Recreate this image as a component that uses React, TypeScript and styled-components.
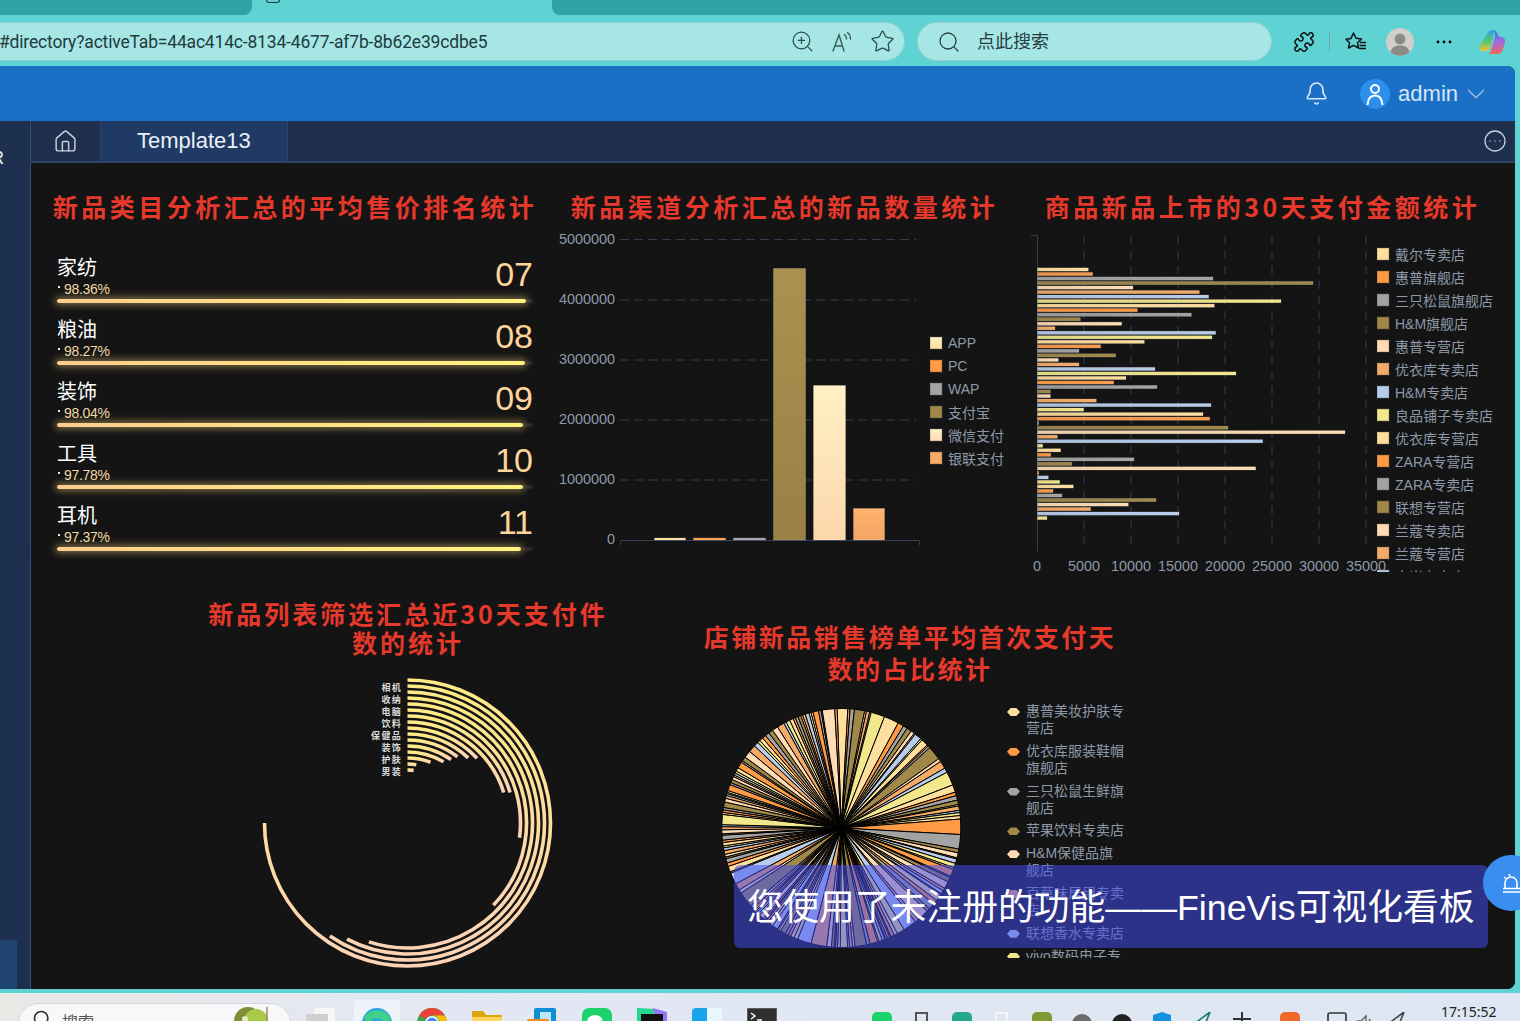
import React from 'react';
import styled, { createGlobalStyle } from 'styled-components';
import { Bell, ChevronDown, CircleEllipsis, House, Puzzle, Search, Star, ZoomIn } from 'lucide-react';

const SANS = '"Liberation Sans", "Noto Sans CJK SC", sans-serif';
const PALETTE = ['#ffdf9e', '#ff9a45', '#a3a3a3', '#a08848', '#ffdcb4', '#f5ab68', '#b8ccec', '#f2e78a'];

const Global = createGlobalStyle`
  html, body { margin: 0; padding: 0; background: #5fd2d3; }
  * { box-sizing: border-box; }
`;

const Screen = styled.div`
  position: relative;
  width: 1520px;
  height: 1021px;
  overflow: hidden;
  background: #5fd2d3;
  font-family: ${SANS};
  display: flex;
  flex-direction: column;
`;

/* browser chrome */
const TabStrip = styled.div`
  height: 22px;
  flex: none;
  display: flex;
  align-items: flex-start;
`;
const BrowserTab = styled.div<{ $w?: number; $side: 'l' | 'r' }>`
  height: 15px;
  background: #30a3a6;
  flex: ${p => (p.$w ? `0 0 ${p.$w}px` : '1')};
  border-radius: ${p => (p.$side === 'l' ? '0 0 8px 0' : '0 0 0 8px')};
`;
const ActiveTab = styled.div`
  flex: 0 0 300px;
  height: 15px;
  padding-left: 14px;
`;
const Favicon = styled.div`
  width: 14px;
  height: 3px;
  border: 1px solid #1c3a3a;
  border-top: none;
  border-radius: 0 0 3px 3px;
`;
const AddressRow = styled.div`
  height: 44px;
  flex: none;
  display: flex;
  align-items: flex-start;
  color: #2b4a4a;
`;
const UrlPill = styled.div`
  width: 905px;
  height: 39px;
  background: #a6e7e6;
  border: 1px solid #93cfcf;
  border-left: none;
  border-radius: 0 20px 20px 0;
  display: flex;
  align-items: center;
  padding-right: 2px;
`;
const UrlText = styled.div`
  flex: 1;
  margin-left: -1px;
  font-family: "Roboto", sans-serif;
  font-size: 17.5px;
  letter-spacing: -0.18px;
  color: #1f3b3c;
  white-space: nowrap;
`;
const IconSlot = styled.div<{ $w: number }>`
  flex: 0 0 ${p => p.$w}px;
  display: flex;
  align-items: center;
  justify-content: center;
`;
const SearchPill = styled.div`
  width: 355px;
  height: 39px;
  margin-left: 12px;
  background: #a6e7e6;
  border: 1px solid #93cfcf;
  border-radius: 20px;
  display: flex;
  align-items: center;
  padding-left: 19px;
  gap: 16px;
  font-family: "Noto Sans CJK SC", sans-serif;
  font-size: 18px;
  color: #27403f;
`;
const SearchHint = styled.span`
  margin-bottom: 3px;
`;
const ToolIcons = styled.div`
  height: 39px;
  display: flex;
  align-items: center;
  padding-left: 21px;
`;
const ToolDivider = styled.div`
  width: 1px;
  height: 20px;
  background: #6fa9a9;
  margin: 0 15px 0 14px;
`;

/* application window */
const AppWindow = styled.div`
  width: 1515px;
  height: 923px;
  flex: none;
  display: flex;
  flex-direction: column;
  overflow: hidden;
  border-radius: 0 8px 8px 0;
  background: #141414;
`;
const AppHeader = styled.div`
  height: 55px;
  flex: none;
  background: #1a70c6;
  display: flex;
  align-items: center;
  justify-content: flex-end;
  padding-right: 24px;
  color: #d8e6f5;
`;
const UserAvatar = styled.div`
  width: 30px;
  height: 30px;
  border-radius: 50%;
  background: #2d8eee;
  margin-left: 31px;
  display: flex;
  align-items: center;
  justify-content: center;
`;
const UserName = styled.span`
  font-size: 22px;
  margin: 0 3px 0 8px;
`;
const AppBody = styled.div`
  flex: 1;
  display: flex;
  min-height: 0;
`;
const Sidebar = styled.div`
  width: 31px;
  flex: none;
  background: #1e3050;
  border-right: 1px solid #3a4d70;
  display: flex;
  flex-direction: column;
  overflow: hidden;
`;
const SideGlyph = styled.span`
  margin: 28px 0 0 -9px;
  font-size: 18px;
  line-height: 18px;
  color: #e6ecf5;
`;
const SideActive = styled.div`
  margin-top: auto;
  width: 17px;
  height: 49px;
  background: #1f4470;
`;
const MainColumn = styled.div`
  flex: 1;
  display: flex;
  flex-direction: column;
  min-width: 0;
`;
const PageTabs = styled.div`
  height: 42px;
  flex: none;
  background: #202f4e;
  border-bottom: 2px solid #31426a;
  display: flex;
  align-items: stretch;
  padding-right: 8px;
`;
const HomeTab = styled.div`
  width: 70px;
  border-right: 1px solid #31426a;
  display: flex;
  align-items: center;
  justify-content: center;
  color: #c5d0e0;
`;
const NamedTab = styled.div`
  width: 187px;
  background: #1f3a64;
  border-right: 1px solid #31426a;
  padding-left: 36px;
  display: flex;
  align-items: center;
  font-size: 22px;
  color: #eaf0f8;
`;
const TabMore = styled.div`
  margin-left: auto;
  display: flex;
  align-items: center;
  color: #c5d0e0;
`;
const Dashboard = styled.div`
  flex: 1;
  display: flex;
  flex-direction: column;
  background: #141414;
  min-height: 0;
`;
const TopRow = styled.div`
  height: 426px;
  flex: none;
  display: grid;
  grid-template-columns: 528px 451px 505px;
  padding-top: 28px;
`;
const BottomRow = styled.div`
  flex: 1;
  display: grid;
  grid-template-columns: 436px 430px;
  column-gap: 69px;
  padding-left: 159px;
  min-height: 0;
`;
const Panel = styled.section`
  display: flex;
  flex-direction: column;
  min-width: 0;
`;
const Title = styled.h2`
  margin: 0;
  height: 35px;
  font-family: "Noto Sans CJK SC", sans-serif;
  font-size: 25px;
  line-height: 30px;
  font-weight: 700;
  letter-spacing: 3.5px;
  color: #e6392b;
  text-align: center;
  white-space: nowrap;
`;
const WrapTitle = styled.h2<{ $lh: number; $top: number; $h: number; $sp: number; $inset: number }>`
  margin: ${p => p.$top}px ${p => p.$inset}px 0;
  height: ${p => p.$h}px;
  font-family: "Noto Sans CJK SC", sans-serif;
  font-size: 25px;
  line-height: ${p => p.$lh}px;
  font-weight: 700;
  letter-spacing: ${p => p.$sp}px;
  color: #e6392b;
  text-align: center;
`;
const ChartRow = styled.div`
  display: flex;
  align-items: flex-start;
  height: 346px;
`;
const ChartSvg = styled.svg`
  flex: none;
  overflow: visible;
`;
const Legend = styled.ul<{ $top: number }>`
  list-style: none;
  margin: 0 0 0 5px;
  padding: ${p => p.$top}px 0 0;
  height: 100%;
  overflow: hidden;
`;
const LegendItem = styled.li`
  display: flex;
  align-items: center;
  gap: 6px;
  height: 23px;
  font-size: 14px;
  color: #8d99a9;
  white-space: nowrap;
`;
const Swatch = styled.i<{ $c: string }>`
  width: 12px;
  height: 12px;
  background: ${p => p.$c};
  box-shadow: inset 0 0 0 1px rgba(0, 0, 0, 0.12);
  outline: 1px solid rgba(255, 255, 255, 0.08);
`;

/* ranking list */
const RankList = styled.div`
  padding: 16px 26px 0;
`;
const RankRow = styled.div`
  height: 62px;
  display: flex;
  flex-direction: column;
  padding-top: 13px;
`;
const RankHead = styled.div`
  display: flex;
  justify-content: space-between;
  align-items: flex-start;
  height: 44px;
`;
const RankName = styled.div`
  font-family: "Noto Sans CJK SC", sans-serif;
  font-size: 20px;
  line-height: 24px;
  color: #fff;
`;
const RankValue = styled.div`
  margin-top: 2px;
  font-size: 14px;
  line-height: 16px;
  letter-spacing: -0.3px;
  color: #f3d8a6;
  display: flex;
  align-items: center;
  gap: 4px;
  &::before {
    content: '';
    width: 2px;
    height: 2px;
    margin: -5px 0 0 1px;
    background: #eee;
  }
`;
const RankNumber = styled.div`
  font-size: 34px;
  line-height: 36px;
  color: #ffd49a;
  margin-top: 1px;
`;
const RankTrack = styled.div`
  height: 4px;
  border-radius: 2px;
  background: #262626;
`;
const RankFill = styled.div`
  height: 100%;
  border-radius: 2px;
  background: linear-gradient(90deg, #ffcd8e, #fff37e);
  box-shadow: 0 0 7px 2px rgba(255, 222, 130, 0.45);
`;

/* pie legend */
const PieRow = styled.div`
  height: 272px;
  display: flex;
  align-items: flex-start;
`;
const PieLegend = styled.ul`
  list-style: none;
  margin: 0 0 0 7px;
  padding: 17px 0 0;
  width: 119px;
  height: 100%;
  overflow: hidden;
`;
const PieLegendItem = styled.li`
  display: flex;
  align-items: flex-start;
  gap: 6px;
  margin-bottom: 5.8px;
  font-size: 14px;
  line-height: 17px;
  color: #8d99a9;
`;
const PieMarker = styled.i<{ $c: string }>`
  flex: none;
  width: 13px;
  height: 8px;
  margin-top: 5px;
  background: ${p => p.$c};
  clip-path: polygon(0 50%, 28% 0, 72% 0, 100% 50%, 72% 100%, 28% 100%);
`;
const PieLabel = styled.span`
  width: 98px;
`;

/* overlay things */
const Notice = styled.div`
  position: absolute;
  left: 734px;
  top: 865px;
  width: 754px;
  height: 83px;
  padding-bottom: 5px;
  border-radius: 6px;
  background: rgba(67, 78, 240, 0.53);
  display: flex;
  align-items: center;
  justify-content: center;
  font-size: 35.8px;
  color: #fff;
  white-space: nowrap;
`;
const FloatButton = styled.div`
  position: absolute;
  left: 1483px;
  top: 855px;
  width: 56px;
  height: 56px;
  border-radius: 50%;
  background: #3a8ef0;
  padding: 18px 0 0 20px;
`;
const DragDots = styled.div`
  position: absolute;
  left: 26px;
  top: 546px;
  width: 12px;
  height: 18px;
  background-image: radial-gradient(circle, #1e3050 1px, transparent 1.3px);
  background-size: 9px 7.5px;
`;

/* taskbar */
const Taskbar = styled.div`
  flex: 1;
  margin-top: 4px;
  background: linear-gradient(90deg, #e9e9e6, #e2e7f3 30%, #dde6f2 100%);
  display: flex;
  align-items: flex-start;
  overflow: hidden;
`;
const TaskSearch = styled.div`
  flex: none;
  margin: 10px 0 0 18px;
  width: 273px;
  height: 40px;
  border-radius: 20px;
  background: #f8f8f9;
  border: 1px solid #d6d6dc;
  display: flex;
  align-items: flex-start;
  padding: 5px 0 0 13px;
  gap: 10px;
  font-family: "Noto Sans CJK SC", sans-serif;
  font-size: 16px;
  color: #555;
`;
const TaskDeco = styled.div`
  margin-left: auto;
  margin-right: 18px;
  margin-top: -4px;
`;
const AppTile = styled.div<{ $active?: boolean; $w?: number }>`
  flex: none;
  width: ${p => (p.$active ? 48 : p.$w ?? 55)}px;
  height: 40px;
  margin: 6px ${p => (p.$active ? 3.5 : 0)}px 0;
  padding-top: 9px;
  display: flex;
  justify-content: center;
  border-radius: 5px 5px 0 0;
  background: ${p => (p.$active ? '#eef2f9' : 'transparent')};
  box-shadow: ${p => (p.$active ? 'inset 0 0 0 1px #e6eaf2' : 'none')};
`;
const Tray = styled.div<{ $gap: number; $left: number }>`
  flex: none;
  margin-left: ${p => p.$left}px;
  display: flex;
  align-items: flex-start;
  gap: ${p => p.$gap}px;
  padding-top: 19px;
`;
const Clock = styled.div`
  margin-left: auto;
  margin-right: 9px;
  margin-top: 10px;
  width: 70px;
  font-family: "Noto Sans", sans-serif;
  font-size: 14px;
  line-height: 18px;
  color: #222;
`;

/* data */
const RANKS = [
  { name: '家纺', value: '98.36%', no: '07', pct: 98.5 },
  { name: '粮油', value: '98.27%', no: '08', pct: 98.3 },
  { name: '装饰', value: '98.04%', no: '09', pct: 98.0 },
  { name: '工具', value: '97.78%', no: '10', pct: 97.8 },
  { name: '耳机', value: '97.37%', no: '11', pct: 97.4 },
];
const CHANNELS = ['APP', 'PC', 'WAP', '支付宝', '微信支付', '银联支付'];
const SWATCH2 = ['linear-gradient(#fff0c0,#ffdf9e)', '#ff9a45', '#a3a3a3', '#a08848', 'linear-gradient(#fff0c8,#ffdcb4)', '#f5ab68'];
const STORES = ['戴尔专卖店', '惠普旗舰店', '三只松鼠旗舰店', 'H&M旗舰店', '惠普专营店', '优衣库专卖店', 'H&M专卖店', '良品铺子专卖店', '优衣库专营店', 'ZARA专营店', 'ZARA专卖店', '联想专营店', '兰蔻专卖店', '兰蔻专营店', '小米专卖店'];
const PIE_STORES = ['惠普美妆护肤专营店', '优衣库服装鞋帽旗舰店', '三只松鼠生鲜旗舰店', '苹果饮料专卖店', 'H&M保健品旗舰店', '百草味居用专卖店', '联想香水专卖店', 'vivo数码电子专营店'];
const PIE_COLORS = ['#ffdf9e', '#ff9a45', '#a3a3a3', '#a08848', '#ffdcb4', '#f5ab68', '#b8ccec', '#f2e78a'];

const BAR_ENDS = [205,218,579,879,339,538,566,783,583,352,514,181,305,105,587,576,373,242,177,287,115,177,405,648,318,281,411,91,91,229,573,191,549,569,56,624,975,112,728,68,122,92,342,156,707,56,85,119,160,99,126,408,325,212,477,81];

const RING_ENDS = [270, 214.5, 207.5, 198, 133.8, 97.5, 73.5, 72.4, 47, 43, 37, 34.4, 30.5, 20.7, 8.6, 6.6];
const RING_LABELS = ['相机', '收纳', '电脑', '饮料', '保健品', '装饰', '护肤', '男装'];

const polar = (cx: number, cy: number, r: number, deg: number) => {
  const a = (deg * Math.PI) / 180;
  return [cx + r * Math.sin(a), cy - r * Math.cos(a)];
};
const arcPath = (cx: number, cy: number, r: number, from: number, to: number) => {
  const [x0, y0] = polar(cx, cy, r, from);
  const [x1, y1] = polar(cx, cy, r, to);
  return `M${x0.toFixed(2)} ${y0.toFixed(2)}A${r} ${r} 0 ${to - from > 180 ? 1 : 0} 1 ${x1.toFixed(2)} ${y1.toFixed(2)}`;
};

const pieSlices = (() => {
  let seed = 20240517;
  const rnd = () => {
    seed = (seed * 1664525 + 1013904223) >>> 0;
    return seed / 4294967296;
  };
  const weights: number[] = [4.6];
  for (let i = 0; i < 165; i++) {
    const r = rnd();
    weights.push(r < 0.12 ? 4 + rnd() * 3 : r < 0.42 ? 1.8 + rnd() * 1.6 : 0.5 + rnd() * 1.2);
  }
  const total = weights.reduce((a, b) => a + b, 0);
  let angle = -2;
  return weights.map((w, i) => {
    const span = (w / total) * 360;
    const from = angle;
    angle += span;
    return { from, to: angle, color: PIE_COLORS[i % 8] };
  });
})();

const ChannelChart = () => {
  const grid = [
    ['5000000', 239.5],
    ['4000000', 300],
    ['3000000', 360],
    ['2000000', 420],
    ['1000000', 480],
  ] as const;
  const bars = [
    { x: 654.5, w: 31, top: 538, f: '#ffdf9e' },
    { x: 693.5, w: 32, top: 538, f: '#ff9a45' },
    { x: 733.5, w: 32, top: 538, f: '#a3a3a3' },
    { x: 773.5, w: 32, top: 268.5, f: 'url(#gBrown)' },
    { x: 813.5, w: 32, top: 385.5, f: 'url(#gCream)' },
    { x: 853.5, w: 31, top: 508.5, f: 'url(#gOrange)' },
  ];
  return (
    <ChartSvg width={366} height={340} viewBox="559 226 366 340">
      <defs>
        <linearGradient id="gBrown" x1="0" y1="0" x2="0" y2="1"><stop offset="0" stopColor="#aa9150" /><stop offset="1" stopColor="#9a8045" /></linearGradient>
        <linearGradient id="gCream" x1="0" y1="0" x2="0" y2="1"><stop offset="0" stopColor="#fff0c4" /><stop offset="1" stopColor="#fdd7ac" /></linearGradient>
        <linearGradient id="gOrange" x1="0" y1="0" x2="0" y2="1"><stop offset="0" stopColor="#ffb36f" /><stop offset="1" stopColor="#f2a564" /></linearGradient>
      </defs>
      {grid.map(([label, y]) => (
        <g key={label}>
          <line x1={620} x2={916} y1={y} y2={y} stroke="#2f3e54" strokeDasharray="9 5" />
          <text x={615} y={y + 4} textAnchor="end" fontSize={14.4} fill="#8d99a9" fontFamily={SANS}>{label}</text>
        </g>
      ))}
      <text x={615} y={544} textAnchor="end" fontSize={14.4} fill="#8d99a9" fontFamily={SANS}>0</text>
      <path d="M620.5 545V540.5H919.5V545" fill="none" stroke="#2f3e54" />
      {bars.map(b => (
        <rect key={b.x} x={b.x} y={b.top} width={b.w} height={540 - b.top} fill={b.f} stroke="rgba(255,255,255,0.18)" />
      ))}
    </ChartSvg>
  );
};

const PaymentChart = () => {
  const ticks = [0, 5000, 10000, 15000, 20000, 25000, 30000, 35000];
  return (
    <ChartSvg width={362} height={346} viewBox="1010 226 362 346">
      <defs>
        {PALETTE.map((c, i) => (
          <linearGradient key={c} id={`h${i}`} x1="0" y1="0" x2="1" y2="0">
            <stop offset="0" stopColor={c} stopOpacity={0.92} />
            <stop offset="1" stopColor={c} />
          </linearGradient>
        ))}
      </defs>
      {ticks.map((t, i) => {
        const x = 1037 + i * 47;
        return (
          <g key={t}>
            {i > 0 && <line x1={x} x2={x} y1={236} y2={545} stroke="#2f3e54" strokeDasharray="8 7" />}
            <text x={x} y={571} textAnchor="middle" fontSize={14.4} fill="#8d99a9" fontFamily={SANS}>{t}</text>
          </g>
        );
      })}
      <path d="M1031 235.5H1037.5V551.5" fill="none" stroke="#2f3e54" />
      {BAR_ENDS.map((end, i) => (
        <rect
          key={i}
          x={1037.5}
          y={(267.9 + i * 4.52).toFixed(2)}
          width={end / 3 + 1020 - 1037.5}
          height={3.2}
          fill={`url(#h${i % 8})`}
          stroke="rgba(255,255,255,0.22)"
          strokeWidth={0.7}
        />
      ))}
    </ChartSvg>
  );
};

const PolarChart = () => (
  <ChartSvg width={436} height={315} viewBox="190 660 436 315">
    <defs>
      <linearGradient id="ring" x1="0" y1="0" x2="0" y2="1">
        <stop offset="0" stopColor="#ffeb85" />
        <stop offset="0.5" stopColor="#fedd9e" />
        <stop offset="1" stopColor="#fdd3b6" />
      </linearGradient>
    </defs>
    {RING_ENDS.map((end, i) => (
      <path key={i} d={arcPath(407.5, 823, 143 - i * 6, 0, end)} fill="none" stroke="url(#ring)" strokeWidth={3.6} />
    ))}
    {RING_LABELS.map((t, i) => (
      <text key={t} x={402} y={690.5 + i * 12} textAnchor="end" fontSize={9} letterSpacing={1.3} fill="#dcdcdc" fontWeight={700} fontFamily='"Noto Sans CJK SC", sans-serif'>{t}</text>
    ))}
  </ChartSvg>
);

const PieChart = () => (
  <ChartSvg width={305} height={272} viewBox="695 686 305 272">
    {pieSlices.map((s, i) => {
      const [x0, y0] = polar(841.3, 828, 119.5, s.from);
      const [x1, y1] = polar(841.3, 828, 119.5, s.to);
      return (
        <path
          key={i}
          d={`M841.3 828L${x0.toFixed(2)} ${y0.toFixed(2)}A119.5 119.5 0 0 1 ${x1.toFixed(2)} ${y1.toFixed(2)}Z`}
          fill={s.color}
          stroke="#000"
          strokeWidth={1}
        />
      );
    })}
  </ChartSvg>
);

/* browser & taskbar icons */
const ReadAloud = () => (
  <svg width="22" height="22" viewBox="0 0 22 22" fill="none" stroke="#3d5c5c" strokeWidth="1.4" strokeLinecap="round">
    <path d="M2 20L8 4L13 20M4 15H11.5" />
    <path d="M13.5 3.5C15 4.5 15.5 6 15.5 8M16.5 1.5C18.5 3 19.5 5.5 19.5 8" />
  </svg>
);
const FavList = () => (
  <svg width="22" height="22" viewBox="0 0 22 22" fill="none" stroke="#111" strokeWidth="1.5" strokeLinejoin="round">
    <path d="M8.5 2L11 7.3L16.5 8L12.5 11.8L13.5 17L8.5 14.4L3.5 17L4.5 11.8L1 8.2L6 7.4Z" />
    <path d="M15 11.5H21M14.5 14.5H21M14 17.5H21" />
  </svg>
);
const ProfileAvatar = () => (
  <svg width="28" height="28" viewBox="0 0 28 28">
    <circle cx="14" cy="14" r="14" fill="#d0cfcc" />
    <circle cx="14" cy="11" r="5.4" fill="#8c8a86" />
    <path d="M4.5 24C6 18.5 10 17.5 14 17.5S22 18.5 23.5 24A14 14 0 0 1 4.5 24Z" fill="#8c8a86" />
  </svg>
);
const Copilot = () => (
  <svg width="28" height="28" viewBox="0 0 28 28">
    <defs>
      <linearGradient id="cpA" x1="0" y1="0" x2="0" y2="1"><stop offset="0" stopColor="#2fa8e8" /><stop offset="0.55" stopColor="#5ac46a" /><stop offset="1" stopColor="#f2c230" /></linearGradient>
      <linearGradient id="cpB" x1="0" y1="0" x2="0" y2="1"><stop offset="0" stopColor="#2f6fe6" /><stop offset="0.5" stopColor="#a868e0" /><stop offset="1" stopColor="#f0654f" /></linearGradient>
    </defs>
    <path d="M9 6C10 3 12 2 14.5 2H17L12 20C11.4 22 10 23 8 23H5C2.5 23 1 20.5 2 18Z" fill="url(#cpA)" />
    <path d="M19 5C18 3 16.5 2 14.5 2C17 3 17.5 5 17 8L13 23C12.5 25 11 26 9 26H19C22 26 24 24 25 21L27 14C28 10 24 9 22.5 9C20.5 9 20 7 19 5Z" fill="url(#cpB)" />
  </svg>
);
const UserGlyph = () => (
  <svg width="22" height="24" viewBox="0 0 22 24" fill="none" stroke="#fff" strokeWidth="2">
    <circle cx="11" cy="7" r="4" />
    <path d="M3.5 23C4 16.5 7 13.5 11 13.5S18 16.5 18.5 23" />
  </svg>
);
const AlarmGlyph = () => (
  <svg width="20" height="20" viewBox="0 0 20 20" fill="none" stroke="#fff" strokeWidth="1.6">
    <path d="M2 15V10A6 6 0 0 1 14 10V15M0 15.5H18M0 19H18M6 1L6.8 3M1 4L2.6 5.4" />
  </svg>
);
const StackIcon = () => (
  <svg width="30" height="30" viewBox="0 0 30 30">
    <rect x="9" y="0" width="22" height="22" rx="2" fill="#f6f6f6" />
    <rect x="1" y="6" width="22" height="22" rx="2" fill="#3c3c3c" />
    <rect x="1" y="6" width="22" height="9" fill="#cfcfcf" />
  </svg>
);
const EdgeIcon = () => (
  <svg width="30" height="30" viewBox="0 0 30 30">
    <circle cx="15" cy="15" r="15" fill="#2fa5de" />
    <path d="M2 10C6 1 22 -1 28 9C30 14 26 17 22 16C23 10 12 8 8 13C6 15 4 14 2 10Z" fill="#3fd08a" />
    <circle cx="12" cy="21" r="7" fill="#0b62b8" />
  </svg>
);
const ChromeIcon = () => (
  <svg width="30" height="30" viewBox="0 0 30 30">
    <circle cx="15" cy="15" r="15" fill="#34a853" />
    <path d="M15 0A15 15 0 0 1 28 7.5H15A7.5 7.5 0 0 0 8.5 11L2 7.5A15 15 0 0 1 15 0Z" fill="#ea4335" />
    <path d="M28 7.5A15 15 0 0 1 15 30L21.5 19A7.5 7.5 0 0 0 15 7.5Z" fill="#fbbc05" />
    <circle cx="15" cy="15" r="7" fill="#fff" />
    <circle cx="15" cy="15" r="5.4" fill="#4285f4" />
  </svg>
);
const FolderIcon = () => (
  <svg width="30" height="30" viewBox="0 0 30 30">
    <path d="M0 3H11L14 7H30V28H0Z" fill="#dca50d" />
    <rect y="9" width="30" height="20" fill="#ffd45f" />
  </svg>
);
const SquareDuoIcon = () => (
  <svg width="30" height="30" viewBox="0 0 30 30">
    <rect x="7" y="0" width="22" height="24" rx="2" fill="#0d8fd6" />
    <rect x="13" y="4" width="11" height="10" fill="#bfe4f8" />
    <rect x="0" y="11" width="22" height="19" rx="2" fill="#f08a1d" />
    <rect x="5" y="16" width="12" height="5" fill="#fff" />
  </svg>
);
const WeChatIcon = () => (
  <svg width="30" height="30" viewBox="0 0 30 30">
    <rect width="30" height="30" rx="7" fill="#1bd36a" />
    <ellipse cx="13" cy="14" rx="8" ry="7" fill="#fff" />
    <ellipse cx="20" cy="18" rx="6" ry="5" fill="#fff" stroke="#1bd36a" />
  </svg>
);
const DgGlyph = styled.text`
  font-family: ${SANS};
  font-weight: 700;
  font-size: 11px;
  fill: #fff;
`;
const DataGripIcon = () => (
  <svg width="30" height="30" viewBox="0 0 30 30">
    <path d="M0 0L18 1L30 6V30H0Z" fill="#22d88f" />
    <path d="M16 0L30 4V30H22Z" fill="#9775f8" />
    <rect x="4" y="6" width="22" height="22" fill="#111" />
    <DgGlyph x="7" y="21">DG</DgGlyph>
  </svg>
);
const BlueNoteIcon = () => (
  <svg width="30" height="30" viewBox="0 0 30 30">
    <path d="M0 4A4 4 0 0 1 4 0H15V14H30V30H4A4 4 0 0 1 0 26Z" fill="#1aa5e8" />
    <path d="M15 0H30V14H15Z" fill="#e9f6fd" />
  </svg>
);
const TerminalIcon = () => (
  <svg width="30" height="30" viewBox="0 0 30 30">
    <rect width="30" height="30" fill="#2f2f2f" stroke="#888" />
    <path d="M4 5L8 8L4 11M10 12H15" stroke="#fff" strokeWidth="1.4" fill="none" />
  </svg>
);
type MiniKind = 'sq' | 'doc' | 'tri' | 'cross' | 'round' | 'shield' | 'speaker' | 'screen';
const Mini = ({ c, kind }: { c: string; kind: MiniKind }) => (
  <svg width="20" height="20" viewBox="0 0 20 20">
    {kind === 'sq' && <rect width="20" height="20" rx="5" fill={c} />}
    {kind === 'doc' && <rect x="4" y="1" width="11" height="18" fill="none" stroke={c} strokeWidth="2" />}
    {kind === 'tri' && <path d="M18 0L2 12L8 13L10 20Z" fill="none" stroke={c} strokeWidth="1.6" />}
    {kind === 'cross' && <path d="M10 0V20M1 7H19M4 14H16" stroke={c} strokeWidth="2" />}
    {kind === 'round' && <circle cx="10" cy="12" r="10" fill={c} />}
    {kind === 'shield' && <path d="M10 0L19 3V20H1V3Z" fill={c} />}
    {kind === 'speaker' && <path d="M2 9H6L11 4V20M14 7Q17 11 14 15" fill="none" stroke={c} strokeWidth="1.4" />}
    {kind === 'screen' && <rect x="1" y="1" width="18" height="15" rx="2" fill="none" stroke={c} strokeWidth="1.6" />}
  </svg>
);

export default function App() {
  return (
    <Screen>
      <Global />
      <TabStrip>
        <BrowserTab $w={252} $side="l" />
        <ActiveTab><Favicon /></ActiveTab>
        <BrowserTab $side="r" />
      </TabStrip>
      <AddressRow>
        <UrlPill>
          <UrlText>#directory?activeTab=44ac414c-8134-4677-af7b-8b62e39cdbe5</UrlText>
          <IconSlot $w={40}><ZoomIn size={25} strokeWidth={1.15} /></IconSlot>
          <IconSlot $w={40}><ReadAloud /></IconSlot>
          <IconSlot $w={40}><Star size={25} strokeWidth={1.2} /></IconSlot>
        </UrlPill>
        <SearchPill>
          <Search size={24} strokeWidth={1.3} />
          <SearchHint>点此搜索</SearchHint>
        </SearchPill>
        <ToolIcons>
          <Puzzle size={22} strokeWidth={1.7} color="#111" />
          <ToolDivider />
          <FavList />
          <IconSlot $w={19} />
          <ProfileAvatar />
          <IconSlot $w={60}><svg width="16" height="4" viewBox="0 0 16 4"><circle cx="2" cy="2" r="1.4" /><circle cx="8" cy="2" r="1.4" /><circle cx="14" cy="2" r="1.4" /></svg></IconSlot>
          <IconSlot $w={4} />
          <Copilot />
        </ToolIcons>
      </AddressRow>

      <AppWindow>
        <AppHeader>
          <Bell size={25} strokeWidth={1.5} />
          <UserAvatar><UserGlyph /></UserAvatar>
          <UserName>admin</UserName>
          <ChevronDown size={30} strokeWidth={1} color="#9fc0e6" />
        </AppHeader>
        <AppBody>
          <Sidebar>
            <SideGlyph>R</SideGlyph>
            <SideActive />
          </Sidebar>
          <MainColumn>
            <PageTabs>
              <HomeTab><House size={25} strokeWidth={1.4} /></HomeTab>
              <NamedTab>Template13</NamedTab>
              <TabMore><CircleEllipsis size={24} strokeWidth={1.3} /></TabMore>
            </PageTabs>
            <Dashboard>
              <TopRow>
                <Panel>
                  <Title>新品类目分析汇总的平均售价排名统计</Title>
                  <RankList>
                    {RANKS.map(r => (
                      <RankRow key={r.no}>
                        <RankHead>
                          <div>
                            <RankName>{r.name}</RankName>
                            <RankValue>{r.value}</RankValue>
                          </div>
                          <RankNumber>{r.no}</RankNumber>
                        </RankHead>
                        <RankTrack>
                          <RankFill style={{ width: `${r.pct}%` }} />
                        </RankTrack>
                      </RankRow>
                    ))}
                  </RankList>
                </Panel>
                <Panel>
                  <Title>新品渠道分析汇总的新品数量统计</Title>
                  <ChartRow>
                    <ChannelChart />
                    <Legend $top={105}>
                      {CHANNELS.map((c, i) => (
                        <LegendItem key={c}><Swatch $c={SWATCH2[i]} />{c}</LegendItem>
                      ))}
                    </Legend>
                  </ChartRow>
                </Panel>
                <Panel>
                  <Title>商品新品上市的30天支付金额统计</Title>
                  <ChartRow>
                    <PaymentChart />
                    <Legend $top={16}>
                      {STORES.map((s, i) => (
                        <LegendItem key={s}><Swatch $c={PALETTE[i % 8]} />{s}</LegendItem>
                      ))}
                    </Legend>
                  </ChartRow>
                </Panel>
              </TopRow>
              <BottomRow>
                <Panel>
                  <WrapTitle $lh={29} $top={10} $h={61} $sp={3} $inset={14}>新品列表筛选汇总近30天支付件数的统计</WrapTitle>
                  <PolarChart />
                </Panel>
                <Panel>
                  <WrapTitle $lh={32} $top={31} $h={66} $sp={2.5} $inset={0}>店铺新品销售榜单平均首次支付天数的占比统计</WrapTitle>
                  <PieRow>
                    <PieChart />
                    <PieLegend>
                      {PIE_STORES.map((s, i) => (
                        <PieLegendItem key={s}>
                          <PieMarker $c={PIE_COLORS[i]} />
                          <PieLabel>{s}</PieLabel>
                        </PieLegendItem>
                      ))}
                    </PieLegend>
                  </PieRow>
                </Panel>
              </BottomRow>
            </Dashboard>
          </MainColumn>
        </AppBody>
      </AppWindow>

      <Taskbar>
        <TaskSearch>
          <Search size={20} strokeWidth={2} color="#333" />
          <span>搜索</span>
          <TaskDeco>
            <svg width="38" height="24" viewBox="0 0 38 24">
              <circle cx="14" cy="16" r="14" fill="#7e8f3c" />
              <circle cx="22" cy="16" r="12" fill="#a9c948" />
              <circle cx="11" cy="14" r="3" fill="#e5ecc0" />
              <path d="M33 2V24" stroke="#a58a5c" strokeWidth="1.5" />
            </svg>
          </TaskDeco>
        </TaskSearch>
        <AppTile $w={58.5}><StackIcon /></AppTile>
        <AppTile $active><EdgeIcon /></AppTile>
        <AppTile><ChromeIcon /></AppTile>
        <AppTile><FolderIcon /></AppTile>
        <AppTile><SquareDuoIcon /></AppTile>
        <AppTile><WeChatIcon /></AppTile>
        <AppTile><DataGripIcon /></AppTile>
        <AppTile><BlueNoteIcon /></AppTile>
        <AppTile><TerminalIcon /></AppTile>
        <Tray $gap={20} $left={82}>
          <Mini c="#1bd36a" kind="sq" />
          <Mini c="#555" kind="doc" />
          <Mini c="#23a88c" kind="sq" />
          <Mini c="#f5f5f5" kind="doc" />
          <Mini c="#7f9a30" kind="sq" />
          <Mini c="#6b6b6b" kind="round" />
          <Mini c="#222" kind="round" />
          <Mini c="#1492e0" kind="shield" />
          <Mini c="#1c7c6a" kind="tri" />
          <Mini c="#333" kind="cross" />
        </Tray>
        <Tray $gap={27} $left={28}>
          <Mini c="#f0672a" kind="sq" />
          <Mini c="#333" kind="screen" />
        </Tray>
        <Tray $gap={11} $left={8}>
          <Mini c="#666" kind="speaker" />
          <Mini c="#444" kind="tri" />
        </Tray>
        <Clock>17:15:52</Clock>
      </Taskbar>

      <DragDots />
      <Notice>您使用了未注册的功能——FineVis可视化看板</Notice>
      <FloatButton><AlarmGlyph /></FloatButton>
    </Screen>
  );
}
